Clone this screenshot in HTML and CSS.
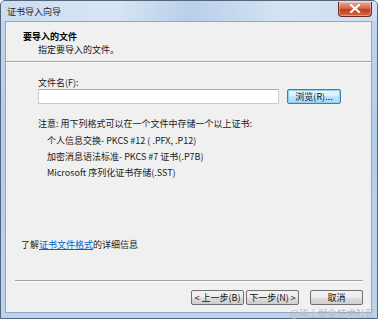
FILE: index.html
```html
<!DOCTYPE html>
<html lang="zh-CN">
<head>
<meta charset="utf-8">
<title>证书导入向导</title>
<link rel="stylesheet" href="styles.css">
</head>
<body>
<div class="window">
  <div class="titlebar">
    <span class="title">证书导入向导</span>
    <div class="close">
      <svg width="12" height="9" viewBox="0 0 12 9"><path d="M2 1 L10 8 M10 1 L2 8" stroke="#ffffff" stroke-width="2.2" stroke-linecap="square"/></svg>
    </div>
  </div>
  <div class="client">
    <div class="header">
      <div class="h-title">要导入的文件</div>
      <div class="h-sub">指定要导入的文件。</div>
    </div>
    <div class="etch"></div>
    <div class="body">
      <div class="label">文件名(F):</div>
      <div class="file-row">
        <div class="input"></div>
        <div class="btn btn-focus">浏览(R)...</div>
      </div>
      <div class="note">注意: 用下列格式可以在一个文件中存储一个以上证书:</div>
      <div class="list">
        <div class="item">个人信息交换- PKCS #12 ( .PFX, .P12)</div>
        <div class="item">加密消息语法标准- PKCS #7 证书(.P7B)</div>
        <div class="item">Microsoft 序列化证书存储(.SST)</div>
      </div>
      <div class="more">了解<a class="link">证书文件格式</a>的详细信息</div>
    </div>
    <div class="footer">
      <div class="etch footer-line"></div>
      <div class="buttons">
        <div class="btn nav">&lt; 上一步(B)</div>
        <div class="btn nav">下一步(N) &gt;</div>
        <div class="btn cancel">取消</div>
      </div>
    </div>
  </div>
  <div class="watermark">@稀土掘金技术社区</div>
</div>
</body>
</html>
```

FILE: styles.css
```css
* { box-sizing: border-box; }
html, body {
  margin: 0;
  padding: 0;
  width: 378px;
  height: 319px;
  overflow: hidden;
  background: #ffffff;
}
body {
  font-family: "Noto Sans CJK SC", "Liberation Sans", sans-serif;
  font-size: 9px;
  color: #1a1a1a;
}
.window {
  position: relative;
  width: 378px;
  height: 319px;
  display: flex;
  flex-direction: column;
  border: 1px solid #55657a;
  border-radius: 5px 5px 0 0;
  background: linear-gradient(180deg, #c4d8ee 0%, #b4cde8 40%, #bdd3eb 100%);
}
.titlebar {
  height: 20px;
  display: flex;
  align-items: center;
  justify-content: space-between;
  padding-left: 6px;
  padding-right: 5px;
  background: linear-gradient(90deg, rgba(255,255,255,0.15) 0%, rgba(255,255,255,0.35) 30%, rgba(150,185,220,0.25) 50%, rgba(255,255,255,0.3) 75%, rgba(255,255,255,0.2) 100%);
}
.title {
  font-size: 9px;
  color: #1e2530;
  line-height: 12px;
  margin-top: 1px;
}
.close {
  width: 34px;
  height: 15px;
  margin-top: -4px;
  border: 1px solid #6b2a20;
  border-top: none;
  border-radius: 0 0 4px 4px;
  background: linear-gradient(180deg, #e8a591 0%, #d5674d 45%, #c23b1e 55%, #d26a4a 100%);
  display: flex;
  align-items: center;
  justify-content: center;
  box-shadow: inset 0 0 0 1px rgba(255,255,255,0.35);
}
.client {
  margin: 0 5px 0 4px;
  height: 292px;
  background: #f0f0f0;
  border: 1px solid #8ea7c3;
  display: flex;
  flex-direction: column;
}
.header {
  height: 39px;
  padding: 8px 0 0 17px;
  line-height: 13px;
}
.h-title {
  font-weight: bold;
  color: #000;
}
.h-sub {
  padding-left: 15px;
  color: #111;
}
.etch {
  height: 2px;
  border-top: 1px solid #a0a0a0;
  border-bottom: 1px solid #ffffff;
}
.body {
  flex: 1;
  display: flex;
  flex-direction: column;
  padding-left: 32px;
  padding-top: 15px;
  line-height: 10px;
}
.label {
  height: 10px;
}
.file-row {
  display: flex;
  align-items: center;
  margin-top: 1px;
  height: 15px;
}
.input {
  width: 241px;
  height: 15px;
  background: #ffffff;
  border: 1px solid #c7ccd4;
  border-top-color: #abadb3;
}
.btn {
  height: 15px;
  display: flex;
  align-items: center;
  justify-content: center;
  font-size: 9px;
  border: 1px solid #707070;
  border-radius: 2px;
  background: linear-gradient(180deg, #f2f2f2 0%, #ebebeb 50%, #dddddd 50%, #cfcfcf 100%);
  color: #111;
  line-height: 10px;
}
.btn-focus {
  margin-left: 8px;
  width: 54px;
  border-color: #3c7fb1;
  background: linear-gradient(180deg, #eaf6fd 0%, #d9f0fc 50%, #bee6fd 50%, #a7d9f5 100%);
  box-shadow: inset 0 0 0 1px #8fd0f2;
}
.note {
  margin-top: 15px;
}
.list {
  margin-top: 4px;
  padding-left: 9px;
  line-height: 16px;
}
.more {
  margin-top: auto;
  margin-left: -17px;
  margin-bottom: 30px;
}
.link {
  color: #0066cc;
  text-decoration: underline;
}
.footer {
  height: 32px;
  padding: 0 8px 0 8px;
}
.footer-line {
  margin-left: 1px;
}
.buttons {
  display: flex;
  justify-content: flex-end;
  margin-top: 8px;
}
.nav {
  width: 53px;
  margin-left: 2px;
}
.cancel {
  width: 53px;
  margin-left: 11px;
}
.watermark {
  position: absolute;
  right: 2px;
  bottom: -1px;
  font-size: 9.5px;
  line-height: 12px;
  color: #b4bac2;
}
```
